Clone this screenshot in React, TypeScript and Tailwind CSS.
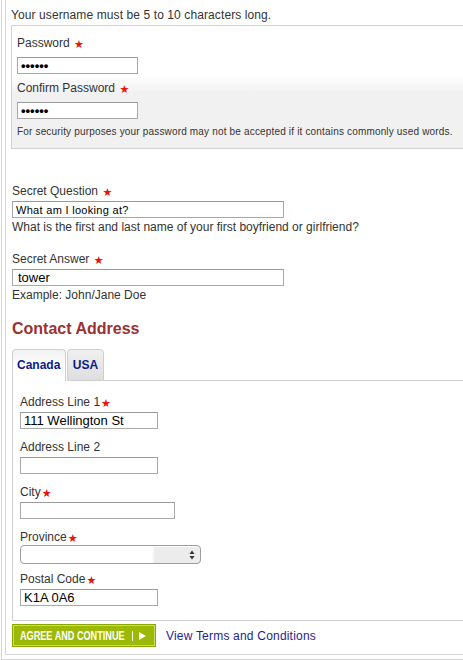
import type { ReactNode } from "react";

function Star() {
  return (
    <span className="ml-px inline-block align-[-1px] font-['DejaVu_Sans',sans-serif] text-[11px] leading-none text-[#e5140c]">
      ★
    </span>
  );
}

function Label({ children, spaced = false, className = "" }: { children: ReactNode; spaced?: boolean; className?: string }) {
  return (
    <div className={`h-[16px] whitespace-nowrap text-[12px] leading-[16px] text-[#333] ${className}`}>
      {children}
      {spaced ? " " : ""}
      <Star />
    </div>
  );
}

function TextBox({ value = "", width, type = "text", className = "" }: { value?: string; width: string; type?: string; className?: string }) {
  return (
    <input
      type={type}
      readOnly
      value={value}
      className={`block h-[17px] ${width} border border-[#a9a9a9] border-t-[#9a9a9a] bg-white px-[3px] text-[13px] leading-none text-black outline-none ${className}`}
    />
  );
}

export default function App() {
  return (
    <div className="h-[660px] w-[463px] overflow-hidden bg-white font-['Liberation_Sans',Arial,sans-serif] text-[12px] leading-[16px] text-[#333]">
      {/* outer frame */}
      <div className="ml-px w-[540px] border-b border-l border-[#d6d6d6] pb-[4px] pl-[3px]">
        {/* inner frame */}
        <div className="border-b border-l border-[#d6d6d6] pb-[7px] pl-[5px] pt-[7px]">
          <p className="h-[16px] tracking-[0.1px]">Your username must be 5 to 10 characters long.</p>

          {/* Password box */}
          <div className="mt-[2px] border border-[#d2d2d2] bg-linear-to-b from-white from-40% to-[#f1f1f1] to-55% pb-[10px] pl-[5px] pt-[9px]">
            <Label spaced>Password</Label>
            <TextBox type="password" value="secret" width="w-[121px]" className="mt-[6px] text-[12px] font-bold" />
            <Label spaced className="mt-[6px]">
              Confirm Password
            </Label>
            <TextBox type="password" value="secret" width="w-[121px]" className="mt-[6px] text-[12px] font-bold" />
            <p className="mt-[6px] h-[13px] whitespace-nowrap text-[10px] leading-[13px] tracking-[0.17px] text-[#333]">
              For security purposes your password may not be accepted if it contains commonly used words.
            </p>
          </div>

          {/* Secret question */}
          <div className="mt-[34px] pl-px">
            <Label spaced>Secret Question</Label>
            <TextBox value="What am I looking at?" width="w-[272px]" className="mt-[2px] !text-[11px] tracking-[0.3px]" />
            <p className="mt-[1px] h-[16px]">What is the first and last name of your first boyfriend or girlfriend?</p>

            <Label spaced className="mt-[16px]">
              Secret Answer
            </Label>
            <TextBox value="tower" width="w-[272px]" className="mt-[2px] px-[5px]" />
            <p className="mt-[1px] h-[16px]">Example: John/Jane Doe</p>

            <h2 className="mt-[16px] h-[20px] text-[16px] font-bold leading-[20px] text-[#9a3234]">Contact Address</h2>

            {/* Tabs */}
            <div className="mt-[10px] flex items-end">
              <div className="flex h-[32px] w-[54px] items-start rounded-t-[4px] border-x border-t border-[#cfcfcf] bg-linear-to-b from-[#f2f2f2] to-white to-60% pl-[4px] pt-[7px] text-[12px] font-bold text-[#0b1a8a]">
                Canada
              </div>
              <div className="ml-[1px] flex h-[32px] w-[37px] items-start justify-center rounded-t-[4px] border border-[#cfcfcf] bg-linear-to-b from-[#f0f0f0] to-[#dedede] pt-[7px] text-[12px] font-bold text-[#0b1a8a]">
                USA
              </div>
              <div className="h-[32px] flex-1 border-b border-[#cfcfcf]" />
            </div>

            {/* Tab panel */}
            <div className="border-b border-l border-[#cfcfcf] pb-[14px] pl-[7px] pt-[13px]">
              <Label>Address Line 1</Label>
              <TextBox value="111 Wellington St" width="w-[138px]" className="mt-[2px]" />

              <div className="mt-[10px] h-[16px]">Address Line 2</div>
              <TextBox width="w-[138px]" className="mt-[2px]" />

              <Label className="mt-[10px]">City</Label>
              <TextBox width="w-[155px]" className="mt-[2px]" />

              <Label className="mt-[10px]">Province</Label>
              <div className="flex h-[19px] w-[181px] items-center justify-end rounded-[4px] border border-[#9d9d9d] bg-linear-to-r from-white from-73% to-[#ececec] to-75% pr-[5px] shadow-[inset_0_1px_0_#fff]">
                <svg width="6" height="10" viewBox="0 0 6 10">
                  <path d="M3 0.5 L5.5 4 H0.5 Z" fill="#333" />
                  <path d="M3 9.5 L5.5 6 H0.5 Z" fill="#333" />
                </svg>
              </div>

              <Label className="mt-[7px]">Postal Code</Label>
              <TextBox value="K1A 0A6" width="w-[138px]" className="mt-[2px]" />
            </div>

            {/* Actions */}
            <div className="mt-[3px] flex items-center">
              <button className="flex h-[23px] w-[144px] items-center border border-[#8ba800] bg-[#9cb905] pl-[7px] text-white shadow-[inset_0_0_0_1px_#c8dd68]">
                <span className="w-[106px] overflow-visible whitespace-nowrap text-left">
                  <span className="inline-block origin-left scale-x-[0.76] text-[12px] font-bold leading-none">
                    AGREE AND CONTINUE
                  </span>
                </span>
                <span className="ml-[6px] h-[10px] w-px bg-white/90" />
                <svg className="ml-[6px]" width="7" height="8" viewBox="0 0 7 8">
                  <path d="M0 0 L7 4 L0 8 Z" fill="#fff" />
                </svg>
              </button>
              <a className="ml-[10px] text-[12px] tracking-[0.2px] text-[#1d1f8c]">View Terms and Conditions</a>
            </div>
          </div>
        </div>
      </div>
    </div>
  );
}
